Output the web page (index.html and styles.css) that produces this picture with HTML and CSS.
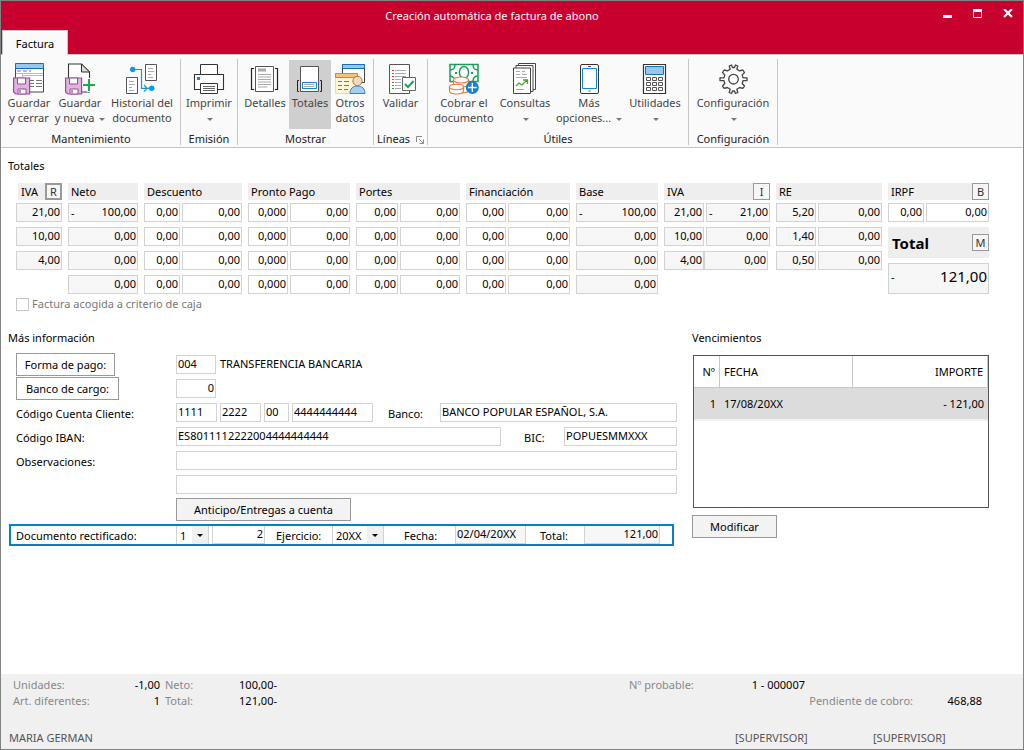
FILE: index.html
```html
<!DOCTYPE html>
<html lang="es">
<head>
<meta charset="utf-8">
<title>Creación automática de factura de abono</title>
<link rel="stylesheet" href="styles.css">
</head>
<body>
<div class="window">
<header class="titlebar">
  <h1 class="title">Creación automática de factura de abono</h1>
  <div class="controls">
    <button class="control" aria-label="Minimizar"><svg width="10" height="10" viewBox="0 0 10 10"><path d="M0 6h9v3H0z" fill="#fff"/></svg></button>
    <button class="control" aria-label="Maximizar"><svg width="10" height="10" viewBox="0 0 10 10"><path d="M.5 1v7.500h8V1" fill="none" stroke="#fff"/><path d="M0 0h9v3H0z" fill="#fff"/></svg></button>
    <button class="control" aria-label="Cerrar"><svg width="10" height="10" viewBox="0 0 10 10"><path d="M1 0l8 8M9 0L1 8" stroke="#fff" stroke-width="2.200"/></svg></button>
  </div>
</header>
<nav class="tabs"><button class="tab">Factura</button></nav>

<div class="ribbon">
  <section class="group maintenance">
    <div class="tools">
      <button class="tool"><svg class="icon" viewBox="0 0 32 32"><path d="M2.500 5v24h28V5z" fill="#fff" stroke="#444"/><path d="M2.500.5h28v5h-28z" fill="#93c9ee" stroke="#1670b8"/><path d="M4 8h4m2 0h4m2 0h2M17 17.500h4m2 0h6M17 20.500h4m2 0h6M17 23.500h4m2 0h6" stroke="#777"/><path d="M3 10.500h27M9.500 11v3M10 12.500h20" stroke="#bbb"/><path d="M.6 15h16v16H3L.6 29z" fill="#e1b4df" stroke="#9b479f" stroke-width="1.200"/><path d="M4.500 15h8v6h-8zM5 26h8v5H5z" fill="#fff" stroke="#9b479f"/><path d="M7 27v3" stroke="#444"/></svg><span>Guardar<br>y cerrar</span></button>
      <button class="tool"><svg class="icon" viewBox="0 0 32 32"><path d="M4.500 16V1h13l8 8v20H10" fill="#fff" stroke="#333" stroke-width="1.100"/><path d="M17.500 1v8h8z" fill="#ddd" stroke="#333"/><path d="M1.600 15h16v16H4l-2.400-2z" fill="#e1b4df" stroke="#9b479f" stroke-width="1.200"/><path d="M5.500 15h8v6h-8zM6 26h8v5H6z" fill="#fff" stroke="#9b479f"/><path d="M8 27v3" stroke="#444"/><path d="M25 15v14M18 22h14" stroke="#fafafa" stroke-width="4"/><path d="M25 16v12M19 22h12" stroke="#1aa851" stroke-width="2"/></svg><span>Guardar<br>y nueva <i class="arrow"></i></span></button>
      <button class="tool"><svg class="icon" viewBox="0 0 32 32"><path d="M19.500 1.500h11v16h-11zM.5 14.500h11v16H.5z" fill="#fff" stroke="#555"/><path d="M22 5.500h5M22 8.500h6M22 11.500h3M22 14.500h5M3 18.500h5M3 21.500h6M3 24.500h3M3 27.500h5" stroke="#aaa"/><path d="M7 6.500h8.500v18.800H25M18 22l3 3.300-3 3.200" fill="none" stroke="#0e9be0" stroke-width="1.200"/><circle cx="6.700" cy="6.500" r="2.700" fill="#0e9be0"/><circle cx="25.700" cy="25.300" r="2.700" fill="#0e9be0"/></svg><span>Historial del<br>documento</span></button>
    </div>
    <h2 class="group-name">Mantenimiento</h2>
  </section>
  <section class="group emission">
    <div class="tools">
      <button class="tool"><svg class="icon" viewBox="0 0 32 32"><path d="M7.500 11V1.500h17V11" fill="#fff" stroke="#333"/><path d="M1.500 11.500h29v15h-29z" fill="#fff" stroke="#333" stroke-width="1.100"/><path d="M4 14h3v3H4z" fill="#1685d0"/><path d="M7.500 20.500h17v10h-17z" fill="#fff" stroke="#333"/><path d="M10 23.500h12M10 25.500h12M10 27.500h12" stroke="#666"/></svg><span>Imprimir<br><i class="arrow"></i></span></button>
    </div>
    <h2 class="group-name">Emisión</h2>
  </section>
  <section class="group show">
    <div class="tools">
      <button class="tool"><svg class="icon" viewBox="0 0 32 32"><path d="M6.500 3.500h18v25h-18z" fill="#fff" stroke="#555"/><path d="M9 5.500h8v3H9z" fill="#aaa"/><path d="M9 11.500h13M9 14h13M9 16.500h13M9 19h13M9 21.500h13M9 24h9" stroke="#aaa"/><path d="M5 5.500H2.500v21H5M26 5.500h2.500v21H26" fill="none" stroke="#222" stroke-width="1.200"/></svg><span>Detalles</span></button>
      <button class="tool selected" aria-pressed="true"><svg class="icon" viewBox="0 0 32 32"><path d="M6.500 3.500h18v25h-18z" fill="#fff" stroke="#555"/><path d="M8.500 19.500h14v6h-14z" fill="#fff" stroke="#1685d0"/><path d="M10.500 21.500h10M10.500 23.500h10" stroke="#aaa"/><path d="M5 17.500H3.500v11H5M26 17.500h1.500v11H26" fill="none" stroke="#222"/></svg><span>Totales</span></button>
      <button class="tool"><svg class="icon" viewBox="0 0 32 32"><path d="M8.500 1.500h22v18h-22z" fill="#fff" stroke="#444"/><path d="M8.500 1.500h22v4h-22z" fill="#93c9ee" stroke="#1670b8"/><path d="M1.500 10.500h22v20h-22z" fill="#fbf5d5" stroke="#eadba8"/><path d="M1.500 10.500h22v4h-22z" fill="#f7c37c" stroke="#e67e2e"/><path d="M4 18.500h4m2 0h5M4 22.500h4m2 0h5M4 26.500h4m2 0h4" stroke="#777"/><path d="M16 30.500c0-5 3-7.500 7.500-7.500s7.500 2.500 7.500 7.500z" fill="#a7cdef" stroke="#3283c6"/><circle cx="23.500" cy="18" r="4.600" fill="#f9d9bd" stroke="#b5713b"/></svg><span>Otros<br>datos</span></button>
    </div>
    <h2 class="group-name">Mostrar</h2>
  </section>
  <section class="group lines">
    <div class="tools">
      <button class="tool"><svg class="icon" viewBox="0 0 32 32"><path d="M4.500 1.500h20v29h-20z" fill="#fff" stroke="#555"/><path d="M10 7.500h11M10 10.500h11M10 13.500h11M10 16.500h6M10 19.500h6M10 22.500h6M10 25.500h6" stroke="#aaa"/><path d="M7 7.500h2M7 13.500h2M7 19.500h2" stroke="#d33"/><path d="M7 10.500h2M7 16.500h2M7 22.500h2M7 25.500h2" stroke="#2a9d4a"/><path d="M17.500 14.500h13v13h-13z" fill="#fff" stroke="#666"/><path d="M20 21l3 3 5.500-6" fill="none" stroke="#1aa851" stroke-width="2"/></svg><span>Validar</span></button>
    </div>
    <h2 class="group-name">Líneas <svg class="launcher" viewBox="0 0 8 8"><path d="M.5 6V.5H6M3 3l4 4M7.500 3.500v4h-4" fill="none" stroke="#888"/></svg></h2>
  </section>
  <section class="group useful">
    <div class="tools">
      <button class="tool"><svg class="icon" viewBox="0 0 32 32"><path d="M2 1.500h28v17H2z" fill="#fff" stroke="#1b9c58" stroke-width="1.500"/><path d="M2 7c3 0 5-2 5-5M25 2c0 3 2 5 5 5M25 18c0-3 2-5 5-5M2 13c2 0 3 1 4 2" fill="none" stroke="#1b9c58" stroke-width="1.400"/><ellipse cx="16" cy="9.500" rx="4.600" ry="6" fill="#fff" stroke="#1b9c58" stroke-width="1.500"/><path d="M7 10h2M23 10h2" stroke="#1b9c58" stroke-width="1.800"/><g fill="#fff" stroke="#e87938" stroke-width="1.100"><path d="M5.500 17v10c0 4 15 4 15 0V17"/><ellipse cx="13" cy="17" rx="7.500" ry="3"/><path d="M5.500 21c0 4 15 4 15 0" fill="none"/><path d="M1.500 24v4c0 4 14 4 14 0v-4"/><ellipse cx="8.500" cy="24" rx="7" ry="2.700"/></g><circle cx="24.300" cy="24.500" r="6.500" fill="#1a80c8"/><path d="M24.300 20v9M20 24.500h8.800" stroke="#fff" stroke-width="1.300"/></svg><span>Cobrar el<br>documento</span></button>
      <button class="tool"><svg class="icon" viewBox="0 0 32 32"><path d="M9.500.5h17v26h-17z" fill="#fff" stroke="#444"/><path d="M7 2.500h17v26H7z" fill="#fff" stroke="#444"/><path d="M4.500 5h17v25.500h-17z" fill="#fff" stroke="#444"/><path d="M7 8.500h4m2 0h3M7 11.500h4m2 0h5M7 14.500h11M7 26.500h8" stroke="#aaa"/><path d="M7 23l3-3 3 2 5-5M14 17h4.500v4" fill="none" stroke="#43a52c" stroke-width="1.300"/></svg><span>Consultas<br><i class="arrow"></i></span></button>
      <button class="tool"><svg class="icon" viewBox="0 0 32 32"><rect x="7.500" y="1.500" width="18" height="29" rx="1.500" fill="#fff" stroke="#333"/><path d="M9.500 5.500h14v20h-14z" fill="#fff" stroke="#1685d0"/><path d="M15 3.500h3M15.500 28h2" stroke="#555"/></svg><span>Más<br>opciones... <i class="arrow"></i></span></button>
      <button class="tool"><svg class="icon" viewBox="0 0 32 32"><path d="M4.500 1.500h22v29h-22z" fill="#fff" stroke="#333" stroke-width="1.200"/><path d="M6.500 3.500h18v8h-18z" fill="#93c9ee" stroke="#1670b8"/><path d="M7.500 14.500h4v3h-4zM13.500 14.500h4v3h-4zM19.500 14.500h4v3h-4zM7.500 19.500h4v3h-4zM13.500 19.500h4v3h-4zM19.500 19.500h4v3h-4zM7.500 24.500h4v3h-4zM13.500 24.500h4v3h-4zM19.500 24.500h4v3h-4z" fill="none" stroke="#555"/></svg><span>Utilidades<br><i class="arrow"></i></span></button>
    </div>
    <h2 class="group-name">Útiles</h2>
  </section>
  <section class="group config">
    <div class="tools">
      <button class="tool"><svg class="icon" viewBox="0 0 32 32"><path d="M13.200 6.300l-1-3.300 2.300-1 1 2.500h2l1-2.500 2.300 1-1 3.300 2.800 1.600 3.200-.9 1.700 2.500-2.300 2.400.8 3H30v2.800h-4l-.8 2.800 2.300 2.500-1.700 2.400-3.200-.9-2.800 1.700 1 3.300-2.300 1-1-2.500h-2l-1 2.500-2.300-1 1-3.300-2.800-1.700-3.200.9-1.700-2.400 2.300-2.500-.8-2.800H3v-2.800h4l.8-3L5.500 9.500 7.200 7l3.200.9z" fill="#fff" stroke="#444" stroke-width="1.300" stroke-linejoin="round"/><circle cx="16.500" cy="16.200" r="4.800" fill="#fff" stroke="#444" stroke-width="1.300"/></svg><span>Configuración<br><i class="arrow"></i></span></button>
    </div>
    <h2 class="group-name">Configuración</h2>
  </section>
</div>

<main class="content">
  <h2 class="section-title">Totales</h2>
  <div class="totals">
    <div class="column">
      <div class="head first"><span>IVA</span><button class="key focused">R</button></div>
      <div class="line"><input class="num" readonly value="21,00" aria-label="IVA 1"></div>
      <div class="line"><input class="num" readonly value="10,00" aria-label="IVA 2"></div>
      <div class="line"><input class="num" readonly value="4,00" aria-label="IVA 3"></div>
    </div>
    <div class="column">
      <div class="head"><span>Neto</span></div>
      <div class="line signed"><span>-</span><input class="num" readonly value="100,00" aria-label="Neto 1"></div>
      <div class="line"><input class="num" readonly value="0,00" aria-label="Neto 2"></div>
      <div class="line"><input class="num" readonly value="0,00" aria-label="Neto 3"></div>
      <div class="line"><input class="num" readonly value="0,00" aria-label="Neto 4"></div>
    </div>
    <div class="column slim">
      <div class="head"><span>Descuento</span></div>
      <div class="line pair"><input class="num" value="0,00" aria-label="Descuento % 1"><input class="num" value="0,00" aria-label="Descuento 1"></div>
      <div class="line pair"><input class="num" value="0,00" aria-label="Descuento % 2"><input class="num" value="0,00" aria-label="Descuento 2"></div>
      <div class="line pair"><input class="num" value="0,00" aria-label="Descuento % 3"><input class="num" value="0,00" aria-label="Descuento 3"></div>
      <div class="line pair"><input class="num" value="0,00" aria-label="Descuento % 4"><input class="num" value="0,00" aria-label="Descuento 4"></div>
    </div>
    <div class="column">
      <div class="head"><span>Pronto Pago</span></div>
      <div class="line pair"><input class="num" value="0,000" aria-label="Pronto pago % 1"><input class="num" value="0,00" aria-label="Pronto pago 1"></div>
      <div class="line pair"><input class="num" value="0,000" aria-label="Pronto pago % 2"><input class="num" value="0,00" aria-label="Pronto pago 2"></div>
      <div class="line pair"><input class="num" value="0,000" aria-label="Pronto pago % 3"><input class="num" value="0,00" aria-label="Pronto pago 3"></div>
      <div class="line pair"><input class="num" value="0,000" aria-label="Pronto pago % 4"><input class="num" value="0,00" aria-label="Pronto pago 4"></div>
    </div>
    <div class="column roomy">
      <div class="head"><span>Portes</span></div>
      <div class="line pair"><input class="num" value="0,00" aria-label="Portes % 1"><input class="num" value="0,00" aria-label="Portes 1"></div>
      <div class="line pair"><input class="num" value="0,00" aria-label="Portes % 2"><input class="num" value="0,00" aria-label="Portes 2"></div>
      <div class="line pair"><input class="num" value="0,00" aria-label="Portes % 3"><input class="num" value="0,00" aria-label="Portes 3"></div>
      <div class="line pair"><input class="num" value="0,00" aria-label="Portes % 4"><input class="num" value="0,00" aria-label="Portes 4"></div>
    </div>
    <div class="column">
      <div class="head"><span>Financiación</span></div>
      <div class="line pair"><input class="num" value="0,00" aria-label="Financiación % 1"><input class="num" value="0,00" aria-label="Financiación 1"></div>
      <div class="line pair"><input class="num" value="0,00" aria-label="Financiación % 2"><input class="num" value="0,00" aria-label="Financiación 2"></div>
      <div class="line pair"><input class="num" value="0,00" aria-label="Financiación % 3"><input class="num" value="0,00" aria-label="Financiación 3"></div>
      <div class="line pair"><input class="num" value="0,00" aria-label="Financiación % 4"><input class="num" value="0,00" aria-label="Financiación 4"></div>
    </div>
    <div class="column">
      <div class="head"><span>Base</span></div>
      <div class="line signed"><span>-</span><input class="num" readonly value="100,00" aria-label="Base 1"></div>
      <div class="line"><input class="num" readonly value="0,00" aria-label="Base 2"></div>
      <div class="line"><input class="num" readonly value="0,00" aria-label="Base 3"></div>
      <div class="line"><input class="num" readonly value="0,00" aria-label="Base 4"></div>
    </div>
    <div class="column">
      <div class="head"><span>IVA</span><button class="key">I</button></div>
      <div class="line pair"><input class="num" readonly value="21,00" aria-label="Tipo IVA 1"><div class="signed"><span>-</span><input class="num" readonly value="21,00" aria-label="Cuota IVA 1"></div></div>
      <div class="line pair"><input class="num" readonly value="10,00" aria-label="Tipo IVA 2"><input class="num" readonly value="0,00" aria-label="Cuota IVA 2"></div>
      <div class="line pair joined"><input class="num" readonly value="4,00" aria-label="Tipo IVA 3"><input class="num" readonly value="0,00" aria-label="Cuota IVA 3"></div>
    </div>
    <div class="column">
      <div class="head"><span>RE</span></div>
      <div class="line pair"><input class="num" readonly value="5,20" aria-label="Tipo RE 1"><input class="num" readonly value="0,00" aria-label="Cuota RE 1"></div>
      <div class="line pair"><input class="num" readonly value="1,40" aria-label="Tipo RE 2"><input class="num" readonly value="0,00" aria-label="Cuota RE 2"></div>
      <div class="line pair"><input class="num" readonly value="0,50" aria-label="Tipo RE 3"><input class="num" readonly value="0,00" aria-label="Cuota RE 3"></div>
    </div>
    <div class="column slim">
      <div class="head"><span>IRPF</span><button class="key">B</button></div>
      <div class="line pair"><input class="num" value="0,00" aria-label="IRPF %"><input class="num" value="0,00" aria-label="IRPF"></div>
      <div class="total-head"><span>Total</span><button class="key">M</button></div>
      <div class="signed total-value"><span>-</span><input class="num" readonly value="121,00" aria-label="Total"></div>
    </div>
  </div>
  <label class="cash"><input type="checkbox" class="check"> Factura acogida a criterio de caja</label>

  <div class="lower">
    <section>
      <h2 class="section-title">Más información</h2>
      <div class="form">
        <div class="row"><div><button class="btn plain">Forma de pago:</button></div>
          <div class="fields"><input class="txt code" value="004" aria-label="Forma de pago"><span class="bank-way">TRANSFERENCIA BANCARIA</span></div></div>
        <div class="row"><div><button class="btn plain wider">Banco de cargo:</button></div>
          <div class="fields"><input class="txt code right" value="0" aria-label="Banco de cargo"></div></div>
        <div class="row"><label for="ccc">Código Cuenta Cliente:</label>
          <div class="fields account"><input id="ccc" class="txt" value="1111"><input class="txt" value="2222" aria-label="Oficina"><input class="txt" value="00" aria-label="DC"><input class="txt" value="4444444444" aria-label="Cuenta"><label for="banco">Banco:</label><input id="banco" class="txt" value="BANCO POPULAR ESPAÑOL, S.A."></div></div>
        <div class="row"><label for="iban">Código IBAN:</label>
          <div class="fields iban"><input id="iban" class="txt" value="ES8011112222004444444444"><label for="bic">BIC:</label><input id="bic" class="txt" value="POPUESMMXXX"></div></div>
        <div class="row"><label for="obs">Observaciones:</label><div class="fields"><input id="obs" class="txt wide"></div></div>
        <div class="row"><span></span><div class="fields"><input class="txt wide" aria-label="Observaciones 2"></div></div>
        <div class="row"><span></span><div><button class="btn advance">Anticipo/Entregas a cuenta</button></div></div>
      </div>
      <div class="rectified">
        <label for="serie">Documento rectificado:</label>
        <div class="pick"><select id="serie"><option>1</option></select></div>
        <input class="txt right docnum" value="2" aria-label="Número de documento">
        <label for="ejercicio">Ejercicio:</label>
        <div class="pick year"><select id="ejercicio"><option>20XX</option></select></div>
        <label for="fecha">Fecha:</label>
        <input id="fecha" class="txt" readonly value="02/04/20XX">
        <label for="total">Total:</label>
        <input id="total" class="txt right" readonly value="121,00">
      </div>
    </section>
    <section>
      <h2 class="section-title">Vencimientos</h2>
      <div class="due-box">
        <table class="due">
          <thead><tr><th class="n">Nº</th><th class="date">FECHA</th><th class="amount">IMPORTE</th></tr></thead>
          <tbody><tr><td class="n">1</td><td class="date">17/08/20XX</td><td class="amount">- 121,00</td></tr></tbody>
        </table>
      </div>
      <button class="btn modify">Modificar</button>
    </section>
  </div>
</main>

<footer class="status">
  <div class="summary">
    <span class="dim">Unidades:</span><span class="end">-1,00</span><span class="dim">Neto:</span><span class="end">100,00-</span><span class="dim probable">Nº probable:</span><span class="docno">1 - 000007</span>
    <span class="dim">Art. diferentes:</span><span class="end">1</span><span class="dim">Total:</span><span class="end">121,00-</span><span class="dim pending">Pendiente de cobro:</span><span class="end">468,88</span>
  </div>
  <div class="users"><span>MARIA GERMAN</span><span>[SUPERVISOR]</span><span>[SUPERVISOR]</span></div>
</footer>
</div>
</body>
</html>
```
FILE: styles.css
```css
* { box-sizing: border-box; }
body, button, input, select { font-family: "Noto Sans", "Open Sans", sans-serif; font-size: 11px; color: #000; }
body { margin: 0; line-height: 16px; }
h1, h2 { margin: 0; font-size: 11px; font-weight: 400; }
button { margin: 0; padding: 0; }
.window { display: flex; flex-direction: column; min-height: 100vh; border: 1px solid #828282; background: #fff; }

.titlebar { display: flex; height: 29px; background: #c8002d; }
.title { flex: 1; padding-left: 50px; line-height: 30px; text-align: center; color: #fff; }
.controls { display: flex; }
.control { width: 30px; height: 24px; padding: 1px 0 0; border: 0; background: none; }
.control svg { display: block; margin: 0 auto; }
.tabs { height: 25px; padding-left: 1px; background: #c8002d; border-bottom: 1px solid #c6c6c6; }
.tab { height: 25px; width: 66px; border: 1px solid #c6c6c6; border-bottom: 0; background: #fafafa; }

.ribbon { display: flex; background: #fafafa; border-bottom: 1px solid #c6c6c6; padding: 4px 0 2px; }
.group { display: flex; flex-direction: column; justify-content: space-between; height: 86px; border-right: 1px solid #c6c6c6; }
.maintenance { width: 180px; padding-left: 1px; }
.emission { width: 57px; }
.show { width: 136px; }
.lines { width: 54px; }
.useful { width: 261px; }
.config { width: 89px; }
.tools { display: flex; justify-content: center; padding-top: 1px; }
.tool { height: 69px; padding: 3px 0 0; border: 0; background: none; color: #444; line-height: 15px; white-space: nowrap; display: flex; flex-direction: column; align-items: center; }
.selected { background: #cfcfcf; }
.maintenance .tool { width: 51px; }
.maintenance .tool:last-child { width: 73px; }
.show .tools { justify-content: flex-start; padding-left: 3px; }
.show .tool { width: 48px; }
.show .tool.selected { width: 42px; }
.show .tool:last-child { width: 38px; }
.useful .tools { justify-content: flex-start; }
.useful .tool { width: 72px; }
.useful .tool:nth-child(2) { width: 50px; }
.useful .tool:nth-child(3) { width: 78px; }
.useful .tool:nth-child(4) { width: 54px; }
.icon { width: 32px; height: 32px; flex: none; }
.arrow { display: inline-block; margin-left: 2px; border: 3px solid transparent; border-top-color: #777; border-bottom: 0; vertical-align: middle; }
.group-name { text-align: center; line-height: 12px; color: #222; }
.launcher { width: 8px; height: 8px; margin-left: 3px; vertical-align: -1px; }

.content { flex: 1; padding: 10px 34px 0 7px; }
.section-title { line-height: 16px; }
.totals { display: grid; grid-template-columns: 46fr 70fr 98fr 102fr 104fr 104fr 82fr 106fr 106fr 101fr; gap: 6px; margin: 9px 0 0 8px; align-items: start; }
.column { display: grid; gap: 5px; min-width: 0; }
.head { display: flex; justify-content: space-between; height: 17px; margin-bottom: -2px; padding-left: 3px; line-height: 17px; background: #eee; }
.first { margin-left: 2px; }
.key { width: 17px; height: 17px; border: 1px solid #999; background: #f6f6f6; color: #333; line-height: 13px; }
.focused { border-width: 2px; line-height: 12px; }
.line { display: grid; height: 19px; }
.pair { grid-template-columns: 40px minmax(0, 1fr); gap: 2px; }
.slim .pair { grid-template-columns: 36px minmax(0, 1fr); }
.roomy .pair { grid-template-columns: 42px minmax(0, 1fr); }
.joined { gap: 0; margin-right: 2px; }
.num, .txt { min-width: 0; width: 100%; height: 19px; margin: 0; padding: 0 1px 2px; border: 1px solid #d2d2d2; border-radius: 0; background: #fff; outline: 0; }
.num { text-align: right; }
.num[readonly], .txt[readonly] { background: #f7f7f7; }
.signed { display: flex; height: 19px; min-width: 0; border: 1px solid #d2d2d2; background: #f7f7f7; padding-left: 2px; line-height: 17px; }
.signed .num { height: 17px; border: 0; padding-right: 1px; }
.total-head { display: flex; justify-content: space-between; align-items: center; height: 31px; padding-left: 4px; background: #eee; font-size: 15px; font-weight: 700; }
.total-value { height: 31px; line-height: 26px; }
.total-value .num { height: 26px; font-size: 15px; }
.cash { display: flex; align-items: center; gap: 3px; margin: 1px 0 0 8px; line-height: 18px; color: #777; }
.check { appearance: none; width: 13px; height: 13px; margin: 0; border: 1px solid #c6c6c6; background: #fff; }

.lower { display: grid; grid-template-columns: 669fr 297fr; gap: 15px; margin-top: 17px; }
.form { margin: 7px 0 0 8px; }
.row { display: grid; grid-template-columns: 160px minmax(0, 1fr); height: 24px; line-height: 24px; }
.row > label { line-height: 26px; }
.fields { display: flex; gap: 4px; padding-top: 2px; line-height: 19px; }
.bank-way { line-height: 17px; }
.txt.code { width: 40px; }
.right { text-align: right; }
.account { display: grid; grid-template-columns: 41px 41px 25px 81px minmax(0, 1fr) 237px; gap: 3px; }
.iban { display: grid; grid-template-columns: minmax(0, 1fr) 57px 113px; gap: 3px; }
.iban label, .account label { line-height: 21px; }
.account label { padding-left: 12px; }
.iban label { padding-left: 20px; }
.btn { display: block; height: 23px; border: 1px solid #999; background: #f3f3f3; line-height: 20px; }
.plain { width: 99px; background: #fff; }
.wider { width: 103px; }
.advance { width: 175px; margin-top: 1px; }
.modify { width: 85px; margin-top: 7px; }
.rectified { display: grid; grid-template-columns: 157px 33px 53px 61px 52px 65px 71px 52px 76px; grid-template-rows: 18px; column-gap: 3px; margin: 3px 3px 0 1px; padding-left: 5px; border: 2px solid #0580c6; line-height: 20px; }
.rectified .txt { height: 18px; border-top: 0; }
.docnum + label { padding-left: 8px; }
.year + label { padding-left: 17px; }
#fecha + label { padding-left: 11px; }
.pick { position: relative; height: 18px; border: solid #d2d2d2; border-width: 0 1px; background: linear-gradient(90deg, transparent calc(100% - 16px), #f0f0f0 0); }
.pick select { display: block; appearance: none; width: 100%; height: 18px; padding: 1px 0 0 3px; border: 0; border-radius: 0; background: transparent; }
.pick::after { content: ""; position: absolute; right: 5px; top: 8px; border: 3px solid transparent; border-top-color: #000; border-bottom: 0; pointer-events: none; }

.due-box { min-height: 153px; margin: 9px 0 0 1px; border: 1px solid #555; background: #fff; }
.due { width: 100%; border-collapse: separate; border-spacing: 0; table-layout: fixed; }
.due th, .due td { height: 32px; padding: 0 4px; font-weight: 400; text-align: left; }
.due th { border: solid #c6c6c6; border-width: 0 1px 1px 0; }
.due td { height: 33px; background: #dcdcdc; border-bottom: 2px solid #f0f0f0; }
.due .n { width: 26px; text-align: right; padding-left: 0; }
.due .date { width: 133px; }
.due .amount { text-align: right; }

.status { display: flex; flex-direction: column; justify-content: space-between; height: 75px; padding: 3px 41px 3px 8px; background: #f0f0f0; }
.summary { display: grid; grid-template-columns: 95px 47px 54px 53px minmax(0, 1fr) 64px; column-gap: 5px; padding-left: 4px; line-height: 16px; }
.dim { color: #888; }
.end { text-align: right; }
.probable { padding-left: 347px; }
.docno { justify-self: end; white-space: nowrap; margin-right: 177px; }
.pending { justify-self: end; }
.users { display: flex; color: #555; }
.users span { width: 138px; }
.users span:first-child { width: auto; flex: 1; }
.users span:last-child { width: 109px; }
```
